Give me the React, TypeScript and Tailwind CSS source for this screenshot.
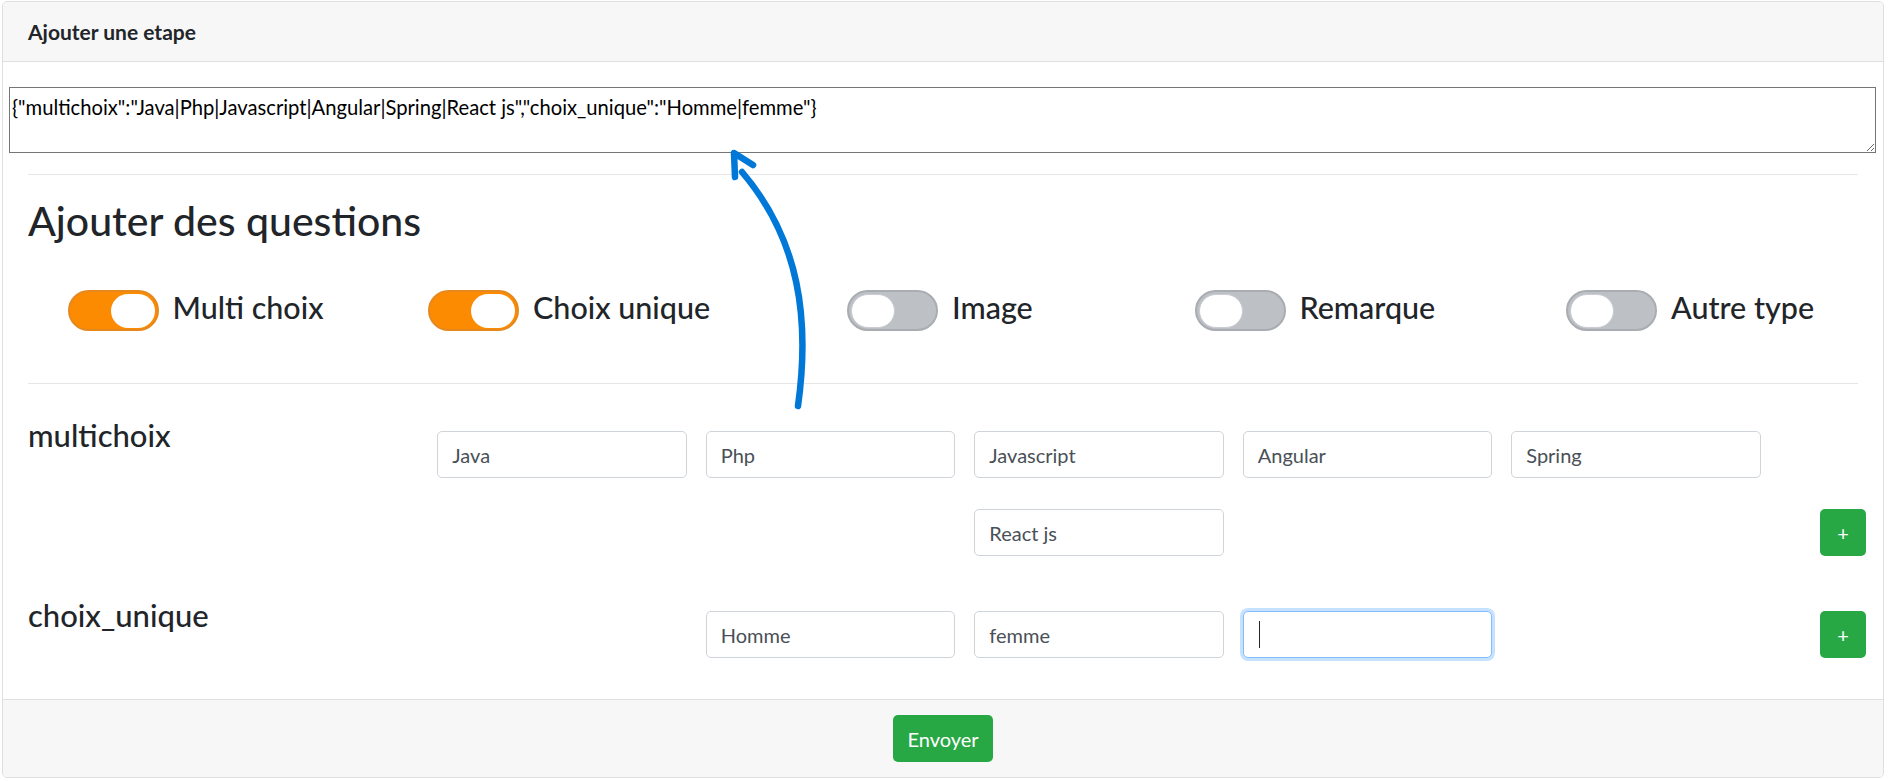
import React from "react";

const toggles = [
  { label: "Multi choix", on: true, w: "w-[360.5px]" },
  { label: "Choix unique", on: true, w: "w-[419px]" },
  { label: "Image", on: false, w: "w-[347.5px]" },
  { label: "Remarque", on: false, w: "w-[371.5px]" },
  { label: "Autre type", on: false, w: "" },
];

function Toggle({ on }: { on: boolean }) {
  return (
    <div
      className={
        on
          ? "mt-[1px] flex h-[41px] w-[91px] shrink-0 items-center justify-end rounded-full border-2 border-[#e5891f] bg-[#fd8b02] pr-[2px]"
          : "mt-[1px] flex h-[41px] w-[91px] shrink-0 items-center justify-start rounded-full border-2 border-[#a9acb1] bg-[#bdc0c5] pl-[2px]"
      }
    >
      <div
        className={
          on
            ? "h-[34px] w-[44px] rounded-full bg-white"
            : "h-[34px] w-[44px] rounded-full border border-[#c9ccd0] bg-white"
        }
      />
    </div>
  );
}

function Field({ value, focused }: { value: string; focused?: boolean }) {
  return (
    <div className="relative h-[47px] w-[249.5px] shrink-0">
      <input
        readOnly
        value={value}
        className={
          focused
            ? "h-full w-full rounded-[5px] border border-[#80bdff] bg-white px-[14px] text-[20px] text-[#495057] caret-transparent shadow-[0_0_0_3px_rgba(0,123,255,0.22)] outline-none"
            : "h-full w-full rounded-[5px] border border-[#ced4da] bg-white px-[14px] text-[20px] text-[#495057] caret-transparent outline-none"
        }
      />
      {focused && <span className="absolute left-[16px] top-[10px] h-[27px] w-px bg-[#212529]" />}
    </div>
  );
}

function PlusButton() {
  return (
    <button className="ml-[59px] flex h-[47px] w-[46px] shrink-0 items-center justify-center self-end rounded-[5px] bg-[#28a745] text-[20px] text-white">
      +
    </button>
  );
}

function QuestionGroup({ name, values, focusLast, top }: { name: string; values: string[]; focusLast?: boolean; top: string }) {
  return (
    <div className={`flex items-start ${top}`}>
      <h4 className="-mt-[2px] w-[409px] shrink-0 text-[31px] font-medium leading-[1.2] text-[#212529]">{name}</h4>
      <div className="mt-[12px] flex w-[1324px] shrink-0 flex-wrap justify-center gap-x-[19px] gap-y-[31px]">
        {values.map((v, i) => (
          <Field key={i} value={v} />
        ))}
        {focusLast && <Field value="" focused />}
      </div>
      <PlusButton />
    </div>
  );
}

export default function App() {
  const json =
    '{"multichoix":"Java|Php|Javascript|Angular|Spring|React js","choix_unique":"Homme|femme"}';

  return (
    <div className="relative h-[781px] w-[1890px] overflow-hidden bg-white pl-[2px] pt-[1px] font-['Lato',sans-serif] text-[#212529]">
      <div className="w-[1882px] overflow-hidden rounded-[5px] border border-[#dfdfdf]">
        {/* Card header */}
        <div className="flex h-[60px] items-center border-b border-[#dfdfdf] bg-[#f7f7f7] pl-[25px]">
          <span className="text-[21px] font-bold">Ajouter une etape</span>
        </div>

        {/* Card body */}
        <div className="pb-[41px]">
          <div className="pl-[6px] pt-[25px]">
            <textarea
              readOnly
              defaultValue={json}
              className="block h-[66px] w-[1867px] resize border border-[#767676] bg-white px-[2px] pt-[7px] text-[20.2px] leading-[1.2] text-black outline-none"
            />
          </div>

          <div className="px-[25px]">
            <hr className="mt-[21px] border-t border-[#e6e6e6]" />

            <h2 className="mt-[21px] text-[41px] font-medium leading-[1.2]">Ajouter des questions</h2>

            <div className="mt-[44px] flex items-start pl-[39.5px]">
              {toggles.map((t) => (
                <div key={t.label} className={`flex shrink-0 items-start gap-[14px] ${t.w}`}>
                  <Toggle on={t.on} />
                  <span className="text-[30.5px] font-medium leading-[36px]">{t.label}</span>
                </div>
              ))}
            </div>

            <hr className="mt-[52px] border-t border-[#e6e6e6]" />

            <QuestionGroup
              name="multichoix"
              values={["Java", "Php", "Javascript", "Angular", "Spring", "React js"]}
              top="mt-[35px]"
            />
            <QuestionGroup name="choix_unique" values={["Homme", "femme"]} focusLast top="mt-[43px]" />
          </div>
        </div>

        {/* Card footer */}
        <div className="flex justify-center border-t border-[#dfdfdf] bg-[#f7f7f7] py-[15px]">
          <button className="h-[47px] w-[100px] rounded-[5px] bg-[#28a745] text-[20px] text-white">Envoyer</button>
        </div>
      </div>

      {/* hand-drawn annotation arrow */}
      <svg
        className="pointer-events-none absolute left-0 top-0"
        width="1890"
        height="781"
        viewBox="0 0 1890 781"
        fill="none"
      >
        <path
          d="M798 406 C810 320 800 240 742 172"
          stroke="#0078d7"
          strokeWidth="6.5"
          strokeLinecap="round"
        />
        <path
          d="M735 177 L734 153 L753 165"
          stroke="#0078d7"
          strokeWidth="6.5"
          strokeLinecap="round"
          strokeLinejoin="round"
        />
      </svg>
    </div>
  );
}
